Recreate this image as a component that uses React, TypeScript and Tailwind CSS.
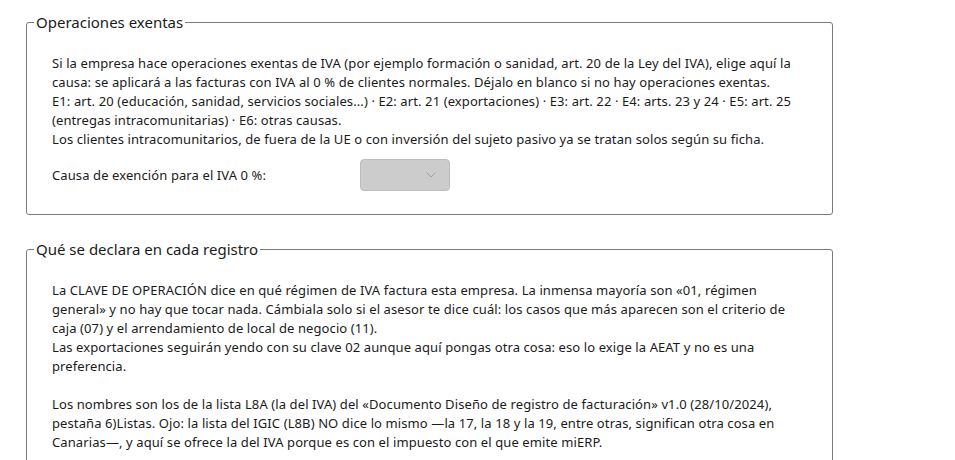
import { ChevronDown } from "lucide-react";

function Section({ title, children }: { title: string; children: React.ReactNode }) {
  return (
    <fieldset className="rounded-[3px] border border-[#7a7a7a] px-[25px] pb-[23px] pt-[21px]">
      <legend className="-ml-[18px] px-[2px] text-[15px] leading-[22px] tracking-normal text-[#1b1b1b]">{title}</legend>
      {children}
    </fieldset>
  );
}

export default function App() {
  return (
    <div
      className="min-h-screen w-full bg-white text-[13px] leading-[19px] tracking-[0.1px] text-[#1b1b1b]"
      style={{ fontFamily: '"Segoe UI", "Noto Sans", "Open Sans", sans-serif' }}
    >
      <div className="flex w-[833px] flex-col gap-[23px] pl-[26px] pt-[11px]">
        <Section title="Operaciones exentas">
          <p>
            Si la empresa hace operaciones exentas de IVA (por ejemplo formación o sanidad, art. 20 de la Ley del IVA), elige aquí la
            causa: se aplicará a las facturas con IVA al 0 % de clientes normales. Déjalo en blanco si no hay operaciones exentas.
            <br />
            E1: art. 20 (educación, sanidad, servicios sociales...) · E2: art. 21 (exportaciones) · E3: art. 22 · E4: arts. 23 y 24 · E5: art. 25
            (entregas intracomunitarias) · E6: otras causas.
            <br />
            Los clientes intracomunitarios, de fuera de la UE o con inversión del sujeto pasivo ya se tratan solos según su ficha.
          </p>
          <div className="mt-[10px] flex items-center">
            <label className="w-[308px]">Causa de exención para el IVA 0 %:</label>
            <button
              type="button"
              disabled
              className="flex h-[32px] w-[90px] items-center justify-end rounded-[4px] border border-[#bdbdbd] bg-[#cccccc] pr-[10px]"
            >
              <ChevronDown className="h-[16px] w-[16px] text-[#8a8a8a]" strokeWidth={1} />
            </button>
          </div>
        </Section>

        <Section title="Qué se declara en cada registro">
          <p>
            La CLAVE DE OPERACIÓN dice en qué régimen de IVA factura esta empresa. La inmensa mayoría son «01, régimen
            general» y no hay que tocar nada. Cámbiala solo si el asesor te dice cuál: los casos que más aparecen son el criterio de
            caja (07) y el arrendamiento de local de negocio (11).
            <br />
            Las exportaciones seguirán yendo con su clave 02 aunque aquí pongas otra cosa: eso lo exige la AEAT y no es una
            preferencia.
          </p>
          <p className="mt-[19px]">
            Los nombres son los de la lista L8A (la del IVA) del «Documento Diseño de registro de facturación» v1.0 (28/10/2024),
            pestaña 6)Listas. Ojo: la lista del IGIC (L8B) NO dice lo mismo —la 17, la 18 y la 19, entre otras, significan otra cosa en
            Canarias—, y aquí se ofrece la del IVA porque es con el impuesto con el que emite miERP.
          </p>
          <div className="h-[40px]" />
        </Section>
      </div>
    </div>
  );
}
